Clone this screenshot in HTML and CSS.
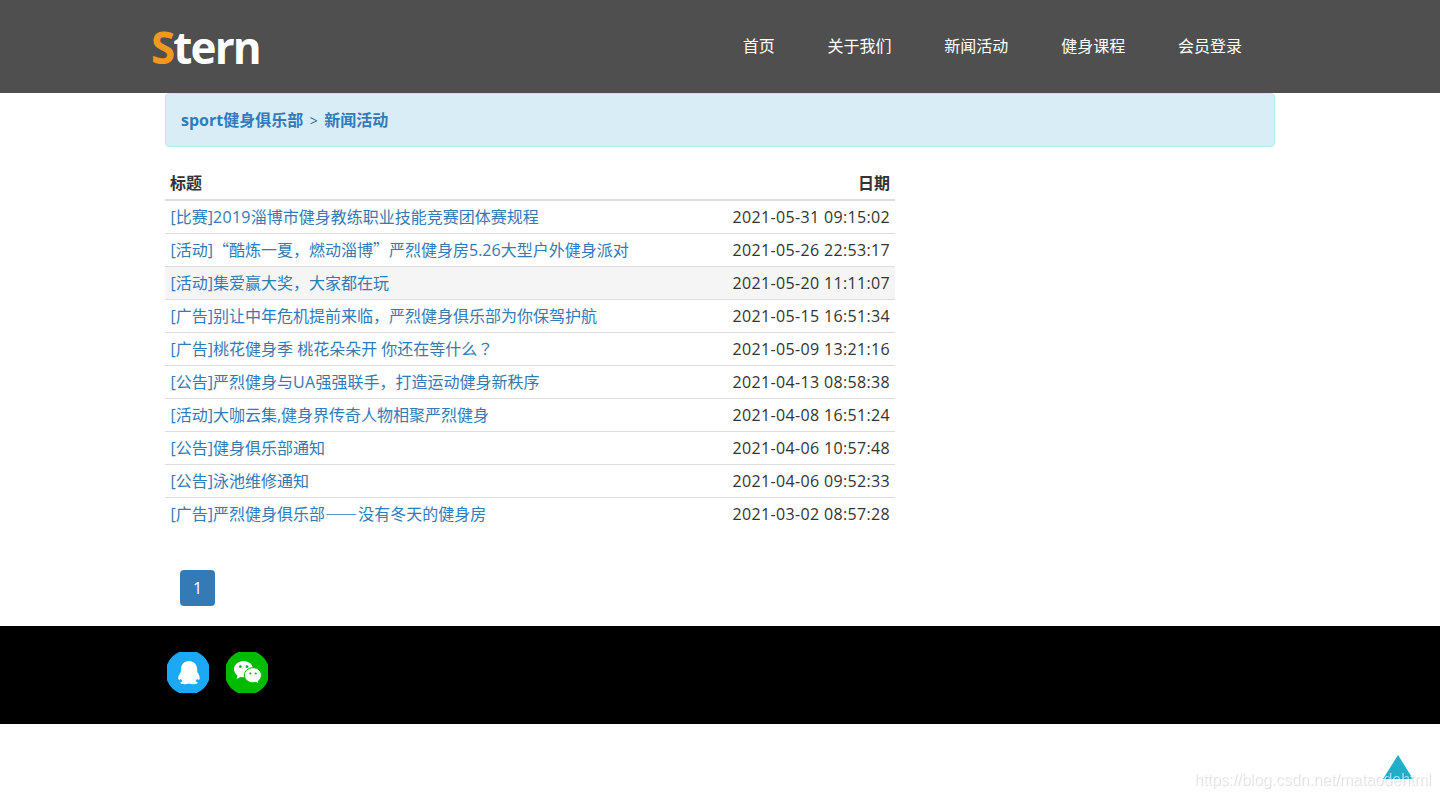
FILE: index.html
```html
<!DOCTYPE html>
<html lang="zh-CN">
<head>
    <meta charset="UTF-8">
    <title>新闻活动</title>
    <link rel="stylesheet" href="styles.css">
</head>
<body>
    <header class="header">
        <div class="header-inner">
            <a class="logo" href="#"><span>S</span>tern</a>
            <nav class="nav">
                <a href="#">首页</a>
                <a href="#">关于我们</a>
                <a href="#">新闻活动</a>
                <a href="#">健身课程</a>
                <a href="#">会员登录</a>
            </nav>
        </div>
    </header>

    <div class="container">
        <div class="alert">
            <a href="#">sport健身俱乐部</a><span class="sep">&gt;</span><a href="#">新闻活动</a>
        </div>

        <table class="table">
            <thead>
                <tr><th>标题</th><th class="date">日期</th></tr>
            </thead>
            <tbody>
                <tr><td><a href="#">[比赛]<span class="num">2019</span>淄博市健身教练职业技能竞赛团体赛规程</a></td><td class="date">2021-05-31 09:15:02</td></tr>
                <tr><td><a href="#">[活动]<span class="cjk">“酷炼一夏，燃动淄博”</span>严烈健身房5.26大型户外健身派对</a></td><td class="date">2021-05-26 22:53:17</td></tr>
                <tr class="active"><td><a href="#">[活动]集爱赢大奖，大家都在玩</a></td><td class="date">2021-05-20 11:11:07</td></tr>
                <tr><td><a href="#">[广告]别让中年危机提前来临，严烈健身俱乐部为你保驾护航</a></td><td class="date">2021-05-15 16:51:34</td></tr>
                <tr><td><a href="#">[广告]桃花健身季 桃花朵朵开 你还在等什么<span class="mark" lang="ja">？</span></a></td><td class="date">2021-05-09 13:21:16</td></tr>
                <tr><td><a href="#">[公告]严烈健身与<span class="num">UA</span>强强联手，打造运动健身新秩序</a></td><td class="date">2021-04-13 08:58:38</td></tr>
                <tr><td><a href="#">[活动]大咖云集,健身界传奇人物相聚严烈健身</a></td><td class="date">2021-04-08 16:51:24</td></tr>
                <tr><td><a href="#">[公告]健身俱乐部通知</a></td><td class="date">2021-04-06 10:57:48</td></tr>
                <tr><td><a href="#">[公告]泳池维修通知</a></td><td class="date">2021-04-06 09:52:33</td></tr>
                <tr><td><a href="#">[广告]严烈健身俱乐部<span class="cjk dash">——</span>没有冬天的健身房</a></td><td class="date">2021-03-02 08:57:28</td></tr>
            </tbody>
        </table>

        <div class="pagination"><a href="#">1</a></div>
    </div>

    <footer class="footer">
        <div class="social">
            <!-- QQ -->
            <svg width="42" height="41" viewBox="0 0 42 41">
                <circle cx="21" cy="20.5" r="22.3" fill="#1ba9f5"/>
                <path fill="#fff" d="M22 9c-5 0-8.100 3.700-8.100 8.500v2.200c-1.500 2.300-2.700 4.300-2.700 6.400 0 1.200.5 1.900 1 1.900.7 0 1.300-.5 1.800-1.200.4 1.100.9 1.800 1.600 2.500-1.600.5-2.200 1-2.200 1.500 0 1.900 6.800 1.700 8.600.6 1.800 1.100 8.600 1.300 8.600-.6 0-.6-.8-1.100-2.300-1.500.8-.7 1.300-1.400 1.700-2.500.5.700 1.100 1.200 1.700 1.200.5 0 1-.7 1-1.900 0-2.100-1-4.100-2.500-6.400v-2.200C30.200 12.700 27 9 22 9z"/>
            </svg>
            <!-- WeChat -->
            <svg width="42" height="41" viewBox="0 0 42 41">
                <circle cx="21" cy="20.500" r="22.300" fill="#00bb00"/>
                <path fill="#fff" d="M17.500 9C12.200 9 8 12.700 8 17.300c0 2.500 1.300 4.700 3.400 6.200L10.700 27l3.700-2.100c1 .3 2 .4 3.100.4C22.800 25.300 27 21.600 27 17.200 27 12.600 22.800 9 17.500 9z"/>
                <path fill="#fff" stroke="#00bb00" stroke-width="1" d="M27 15.700c-4.900 0-8.600 3.300-8.600 7.500s3.700 7.600 8.600 7.600c1 0 2-.2 2.900-.5l2.900 1.700-.6-2.900c2-1.400 3.200-3.500 3.200-5.900 0-4.200-3.700-7.500-8.400-7.500z"/>
                <g fill="#00bb00">
                    <circle cx="14.400" cy="14.700" r="1.400"/><circle cx="21" cy="14.700" r="1.400"/>
                    <circle cx="24.300" cy="21.500" r="1.100"/><circle cx="29.700" cy="21.500" r="1.100"/>
                </g>
            </svg>
        </div>
    </footer>

    <a class="to-top" href="#"></a>
    <div class="watermark">https://blog.csdn.net/mataodehtml</div>
</body>
</html>
```

FILE: styles.css
```css
* {
    box-sizing: border-box;
}
body {
    margin: 0;
    font-family: "Open Sans", "Noto Sans CJK SC", sans-serif;
    font-size: 16px;
    line-height: 22px;
    color: #333;
    background: #fff;
}
a {
    color: #337ab7;
    text-decoration: none;
}
.header {
    height: 93px;
    background: #4f4f4f;
}
.header-inner {
    width: 1140px;
    height: 93px;
    margin: 0 auto;
    display: flex;
    align-items: center;
    justify-content: space-between;
}
.logo {
    margin-left: 1px;
    font-size: 44px;
    font-weight: bold;
    line-height: 60px;
    letter-spacing: -1.9px;
    color: #fff;
}
.logo span {
    color: #f09820;
}
.nav {
    display: flex;
    gap: 52.8px;
    margin-right: 48px;
    padding-bottom: 2px;
}
.nav a {
    color: #fff;
}
.container {
    width: 1110px;
    margin: 0 auto;
}
.alert {
    height: 54px;
    padding: 15px;
    margin-bottom: 20px;
    border: 1px solid #bce8f1;
    border-radius: 4px;
    background: #d9edf7;
    color: #31708f;
}
.alert a {
    font-weight: bold;
}
.alert .sep {
    margin: 0 6.5px;
    font-size: 14px;
}
.table {
    width: 730px;
    border-spacing: 0;
}
.table th,
.table td {
    padding: 5px;
    text-align: left;
    line-height: 22px;
    white-space: nowrap;
}
.table th {
    border-bottom: 2px solid #ddd;
}
.table td {
    height: 33px;
    padding-left: 5.5px;
    border-top: 1px solid #ddd;
}
.table tbody tr:first-child td {
    height: 32px;
    border-top: 0;
}
.table .date {
    text-align: right;
}
.table td.date {
    letter-spacing: 0.34px;
}
.table .active td {
    background: #f5f5f5;
}
.num {
    letter-spacing: 0.3px;
}
/* full-width quotes and dashes */
.cjk {
    font-family: "Noto Sans CJK SC", sans-serif;
    line-height: 1;
}
.dash {
    letter-spacing: 1.2px;
}
.mark {
    font-family: "Noto Sans CJK JP", sans-serif;
    line-height: 1;
}
.pagination {
    display: flex;
    margin: 40px 15px 20px;
}
.pagination a {
    width: 35px;
    height: 36px;
    line-height: 36px;
    text-align: center;
    color: #fff;
    background: #337ab7;
    border-radius: 4px;
}
.footer {
    height: 98px;
    padding-top: 26px;
    background: #000;
}
.social {
    display: flex;
    gap: 17px;
    width: 1106px;
    margin: 0 auto;
}
.to-top {
    position: fixed;
    right: 27px;
    bottom: 20px;
    border: solid transparent;
    border-width: 0 15.5px 24px;
    border-bottom-color: #21aec8;
}
.watermark {
    position: fixed;
    right: 9px;
    bottom: 8px;
    font-family: "Liberation Sans", sans-serif;
    letter-spacing: -0.1px;
    color: rgba(255, 255, 255, 0.6);
    text-shadow: 1px 1px 1px rgba(0, 0, 0, 0.14);
}
```
